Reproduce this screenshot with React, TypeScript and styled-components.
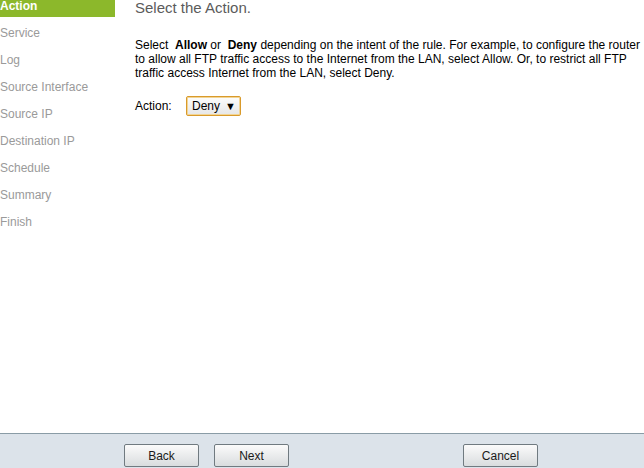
import React from "react";
import styled, { createGlobalStyle } from "styled-components";

const Global = createGlobalStyle`
  html, body { margin: 0; padding: 0; background: #fff; }
  body { font-family: "Liberation Sans", Arial, sans-serif; }
  #root { height: 100vh; }
`;

const Page = styled.div`
  height: 100vh;
  display: flex;
  flex-direction: column;
`;

const Body = styled.div`
  flex: 1;
  display: flex;
  min-height: 0;
`;

const Sidebar = styled.nav`
  width: 115px;
  display: flex;
  flex-direction: column;
  gap: 10px;
`;

const Step = styled.div<{ $active?: boolean }>`
  height: 17px;
  line-height: 12px;
  font-size: 12px;
  color: ${(p) => (p.$active ? "#fff" : "#9a9a9a")};
  background: ${(p) => (p.$active ? "#8cb82b" : "transparent")};
  font-weight: ${(p) => (p.$active ? "bold" : "normal")};
  white-space: nowrap;
`;

const Main = styled.main`
  flex: 1;
  padding-left: 20px;
  padding-right: 4px;
`;

const Heading = styled.h1`
  margin: 0;
  font-size: 15px;
  font-weight: normal;
  line-height: 16px;
  color: #5b5b5b;
`;

const Para = styled.p`
  margin: 22px 0 0 0;
  font-size: 12px;
  line-height: 14px;
  color: #000;
`;

const Row = styled.div`
  margin-top: 16px;
  display: flex;
  align-items: center;
  gap: 15px;
  font-size: 12px;
  color: #000;
`;

const Label = styled.span`
  width: 36px;
`;

const Select = styled.div`
  box-sizing: border-box;
  width: 55px;
  height: 20px;
  border: 1px solid #d99a2b;
  box-shadow: inset 0 0 0 1px #f2d595;
  border-radius: 2px;
  background: linear-gradient(#fdfdfd, #e6e6e6);
  display: flex;
  align-items: center;
  padding-left: 5px;
  gap: 5px;
  font-size: 12px;
  color: #000;
`;

const Arrow = styled.span`
  font-size: 11px;
`;

const Footer = styled.footer`
  height: 35px;
  border-top: 1px solid #8a9ca6;
  background: #dce3ea;
  display: flex;
  align-items: flex-end;
  padding-left: 124px;
  padding-bottom: 1px;
  box-sizing: border-box;
`;

const Button = styled.button<{ $gap?: number }>`
  box-sizing: border-box;
  width: 75px;
  height: 23px;
  margin-left: ${(p) => p.$gap ?? 0}px;
  border: 1px solid #707a80;
  border-radius: 2px;
  background: linear-gradient(#fbfbfb, #d9dcde);
  font-family: "Liberation Sans", Arial, sans-serif;
  font-size: 12px;
  color: #1a1a1a;
  padding: 0;
`;

const steps = [
  "Action",
  "Service",
  "Log",
  "Source Interface",
  "Source IP",
  "Destination IP",
  "Schedule",
  "Summary",
  "Finish",
];

export default function App() {
  return (
    <Page>
      <Global />
      <Body>
        <Sidebar>
          {steps.map((s, i) => (
            <Step key={s} $active={i === 0}>
              {s}
            </Step>
          ))}
        </Sidebar>
        <Main>
          <Heading>Select the Action.</Heading>
          <Para>
            Select&nbsp; <b>Allow</b> or&nbsp; <b>Deny</b> depending on the intent of the rule. For example, to
            configure the router to allow all FTP traffic access to the Internet from the LAN, select Allow. Or,
            to restrict all FTP traffic access Internet from the LAN, select Deny.
          </Para>
          <Row>
            <Label>Action:</Label>
            <Select>
              Deny <Arrow>▼</Arrow>
            </Select>
          </Row>
        </Main>
      </Body>
      <Footer>
        <Button>Back</Button>
        <Button $gap={15}>Next</Button>
        <Button $gap={174}>Cancel</Button>
      </Footer>
    </Page>
  );
}
